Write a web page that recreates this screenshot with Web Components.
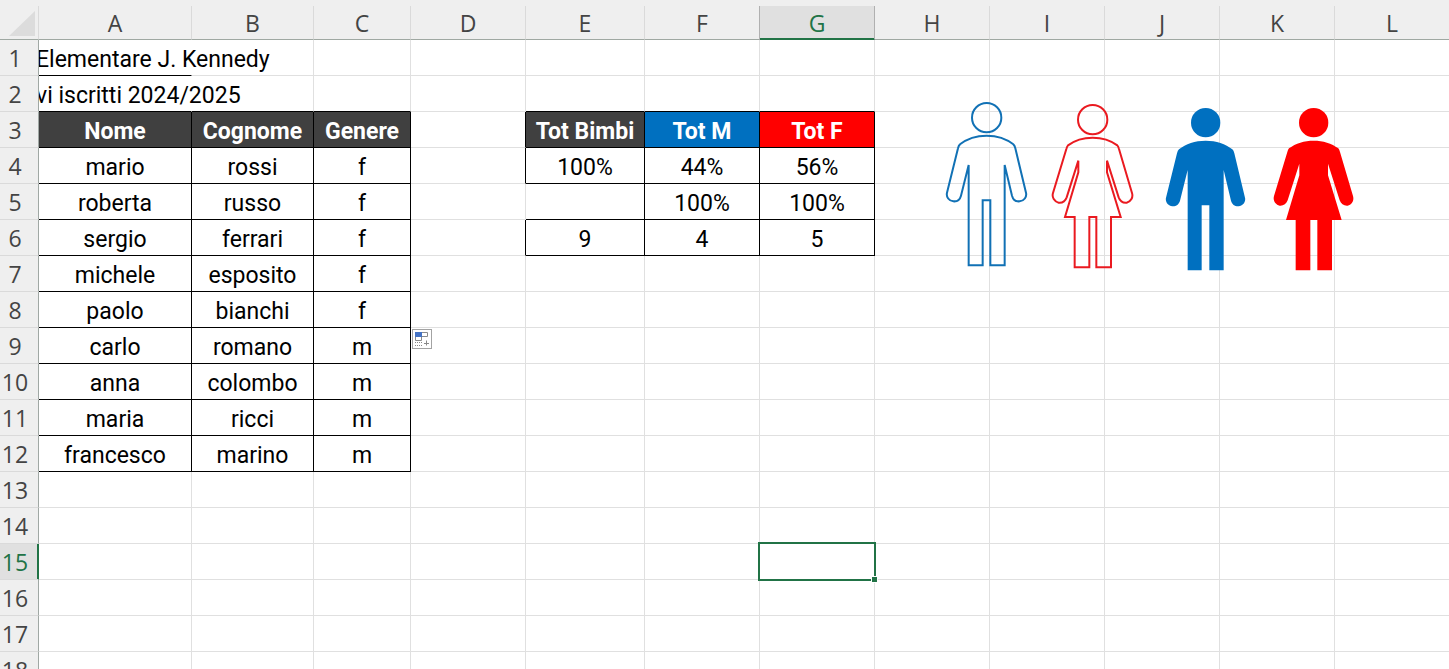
<!DOCTYPE html>
<html lang="it">
<head>
<meta charset="utf-8">
<title>Nuovi iscritti</title>
<style>
html, body { margin: 0; height: 100%; overflow: hidden; background: #fff; }
</style>
</head>
<body>
<work-sheet>
  <person-figure kind="man" variant="outline" label="Bimbo" style="--ink:#1171b5;left:944px;top:101px"></person-figure>
  <person-figure kind="woman" variant="outline" label="Bimba" style="--ink:#ea1a20;left:1050px;top:101px"></person-figure>
  <person-figure kind="man" variant="solid" label="Bimbo" style="--ink:#0070c0;left:1163px;top:106px"></person-figure>
  <person-figure kind="woman" variant="solid" label="Bimba" style="--ink:#ff0000;left:1271px;top:104px"></person-figure>
</work-sheet>

<script>
// A floating drawing of a person, filled or outlined in --ink.
class PersonFigure extends HTMLElement {
  connectedCallback() {
    const man = this.getAttribute('kind') === 'man';
    const solid = this.getAttribute('variant') === 'solid';
    const shape = man
      ? `<circle cx="170" cy="83" r="44"/>
         <path d="M170 137C138 137 110 147 90 163Q86 166 84 175L51 308C48 321 57 333 70 334C81 335 90 328 93 317L116 225V526H158V331H181V526H224V225L246 317C249 328 258 335 269 334C282 333 291 321 288 308L256 175Q254 166 250 163C230 147 202 137 170 137Z"/>`
      : `<circle cx="488" cy="89" r="44"/>
         <path d="M488 143C460 143 434 151 414 166Q411 169 409 177L369 309C365 322 373 335 386 338C397 339 406 333 410 322L445 212V247L405 381H434V532H478V381H499V532H543V381H572L531 247V212L566 322C570 333 579 339 590 338C603 335 610 322 606 309L567 177Q565 169 562 166C542 151 516 143 488 143Z"/>`;
    this.attachShadow({ mode: 'open' }).innerHTML = `
      <style>
        :host { display: block; position: absolute; z-index: 2; width: 84px; height: 168px; }
        svg { display: block; width: 100%; height: 100%; }
        .solid { fill: var(--ink); }
        .outline { fill: none; stroke: var(--ink); stroke-width: 6; }
      </style>
      <svg viewBox="${man ? 42 : 360} 33 252 504" role="img" aria-label="${this.getAttribute('label')}">
        <g class="${solid ? 'solid' : 'outline'}">${shape}</g>
      </svg>`;
  }
}

// The button offered beside a range that has just been filled.
class FillOptions extends HTMLElement {
  connectedCallback() {
    this.attachShadow({ mode: 'open' }).innerHTML = `
      <style>
        :host { display: block; position: absolute; left: 1px; top: 1px; z-index: 2; }
        button { display: block; width: 20px; height: 20px; padding: 0; border: 1px solid #a3a3a3; background: #fff; }
        svg { display: block; width: 18px; height: 18px; }
      </style>
      <button aria-label="Opzioni riempimento automatico">
        <svg viewBox="0 0 18 18" fill="none" stroke="#8a8a8a">
          <path d="M8.500 2.500h6v4h-6M2.500 6.500h6v4h-6z"/>
          <path d="M2 2h7v5h-7z" fill="#4472c4" stroke="none"/>
          <path d="M13.500 10.500v5M11 13.500h5"/>
          <path d="M2 12.500h8M2 15.500h8" stroke-dasharray="1 1"/>
        </svg>
      </button>`;
  }
}

// The frame and the handle round the active cell.
class ActiveCell extends HTMLElement {
  connectedCallback() {
    this.attachShadow({ mode: 'open' }).innerHTML = `
      <style>
        :host { display: block; position: absolute; inset: -2px; z-index: 1; border: 2px solid #217346; }
        i { position: absolute; right: -4px; bottom: -4px; width: 5px; height: 5px; background: #217346; border: 1px solid #fff; }
      </style><i></i>`;
  }
}

class WorkSheet extends HTMLElement {
  connectedCallback() {
    const columns = [...'ABCDEFGHIJKL'];
    const people = [['mario', 'rossi', 'f'], ['roberta', 'russo', 'f'], ['sergio', 'ferrari', 'f'],
      ['michele', 'esposito', 'f'], ['paolo', 'bianchi', 'f'], ['carlo', 'romano', 'm'],
      ['anna', 'colombo', 'm'], ['maria', 'ricci', 'm'], ['francesco', 'marino', 'm']];
    // Each entry is address: [text, classes]; r and b rule a cell's right and bottom edge.
    const cells = {
      A1: ['Elementare J. Kennedy', 'spill b'], A2: ['vi iscritti 2024/2025', 'spill b'],
      B2: ['', 'b'], C2: ['', 'b'], E2: ['', 'b'], F2: ['', 'b'], G2: ['', 'b'],
      A3: ['Nome', 'head r b'], B3: ['Cognome', 'head r b'], C3: ['Genere', 'head r b'],
      D3: ['', 'r'], D4: ['', 'r'], D6: ['', 'r'],
      E3: ['Tot Bimbi', 'head r b'], F3: ['Tot M', 'head male r b'], G3: ['Tot F', 'head female r b'],
      E4: ['100%', 'r b'], F4: ['44%', 'r b'], G4: ['56%', 'r b'],
      E5: ['', 'r b'], F5: ['100%', 'r b'], G5: ['100%', 'r b'],
      E6: ['9', 'r b'], F6: ['4', 'r b'], G6: ['5', 'r b'],
      D9: ['<fill-options></fill-options>', ''], G15: ['<active-cell></active-cell>', '']
    };
    people.forEach((p, i) => p.forEach((t, c) => { cells[columns[c] + (i + 4)] = [t, 'r b']; }));

    const head = columns.map(c => `<th scope="col"${c === 'G' ? ' class="on"' : ''}>${c}</th>`).join('');
    let rows = '';
    for (let n = 1; n <= 18; n++) {
      rows += `<tr><th scope="row"${n === 15 ? ' class="on"' : ''}>${n}</th>` + columns.map(c => {
        const [text, cls] = cells[c + n] || ['', ''];
        return `<td class="${cls}">${text}</td>`;
      }).join('') + '</tr>';
    }
    this.attachShadow({ mode: 'open' }).innerHTML = `
      <style>
        :host { display: block; position: relative; box-sizing: border-box; height: 100vh; padding-top: 6px; overflow: hidden; background: linear-gradient(#efefef 6px, #fff 6px); color: #000; font: 23px/31px Roboto, sans-serif; }
        table { width: calc(100% + 1px); table-layout: fixed; border-collapse: separate; border-spacing: 0; }
        .stub { width: 39px; } .a { width: 153px; } .b1 { width: 122px; } .c { width: 97px; }
        .e { width: 119px; } .n { width: 115px; }
        th, td { box-sizing: border-box; padding: 0; text-align: center; white-space: nowrap; border: 0 solid #e0e0e0; border-width: 0 1px 1px 0; }
        td { position: relative; height: 36px; padding-top: 4px; }
        th { padding-top: 2px; background: #efefef; color: #444; font: 23px/31px "Open Sans", sans-serif; }
        thead th { height: 34px; border-color: #dadada; border-bottom-color: #9fa8a2; }
        thead th:first-child { padding-top: 0; }
        tbody th { position: relative; z-index: 1; height: 36px; padding-right: 8px; border-right-color: #a0a8a4; border-bottom-color: #dadada; }
        th.on { background: #e0e0e0; color: #217346; }
        thead th.on { box-shadow: inset 0 -1px #217346; border-bottom-color: #217346; border-right-color: #b0b0b0; }
        thead th:has(+ .on) { border-right-color: #b0b0b0; }
        tbody th.on { box-shadow: inset -1px 0 #217346; border-right-color: #217346; }
        svg { display: block; width: 38px; height: 33px; }
        .r { border-right-color: #000; }
        .b { border-bottom-color: #000; }
        .spill { text-align: left; text-indent: -3px; border-right-color: #fff; }
        .head { background: #404040; color: #fff; font-weight: 700; }
        .male { background: #0070c0; }
        .female { background: #f00; }
      </style>
      <table>
        <colgroup><col class="stub"><col class="a"><col class="b1"><col class="c"><col class="n"><col class="e"><col class="n"><col class="n"><col class="n"><col class="n"><col class="n"><col class="n"><col></colgroup>
        <thead><tr><th><svg viewBox="0 0 38 33" aria-hidden="true"><path d="M35 5V30H9Z" fill="#dcdcdc"/></svg></th>${head}</tr></thead>
        <tbody>${rows}</tbody>
      </table>
      <slot></slot>`;
  }
}
customElements.define('person-figure', PersonFigure);
customElements.define('fill-options', FillOptions);
customElements.define('active-cell', ActiveCell);
customElements.define('work-sheet', WorkSheet);
</script>
</body>
</html>
